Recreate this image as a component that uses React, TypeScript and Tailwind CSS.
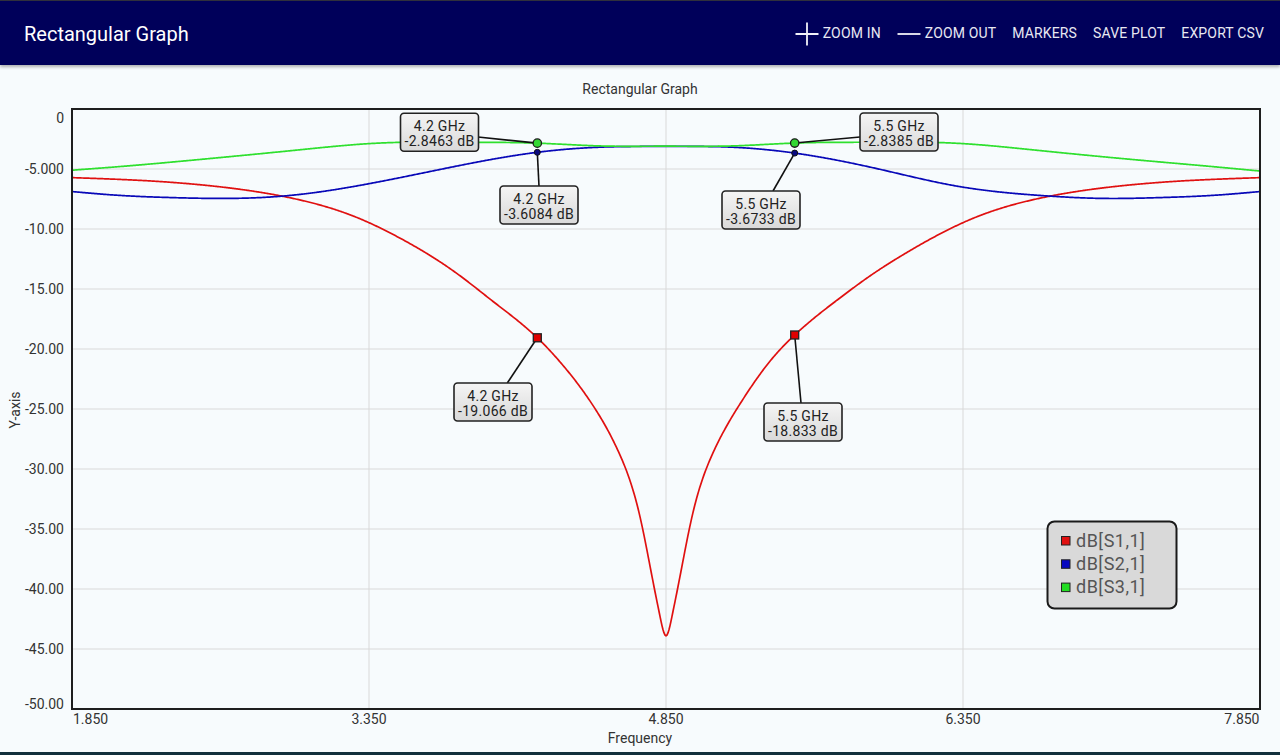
import React from "react";

type P = [number, number];

// plot area: 1.85..7.85 GHz -> x 72..1260, 0..-50 dB -> y 109..709
const X = (f: number) => 72 + (f - 1.85) * 198;
const Y = (db: number) => 109 - db * 12;
const F0 = 4.85;

// natural cubic spline through the sampled points
function spline(pts: P[]) {
  const n = pts.length;
  const xs = pts.map((p) => p[0]);
  const ys = pts.map((p) => p[1]);
  const h: number[] = [];
  for (let i = 0; i < n - 1; i++) h.push(xs[i + 1] - xs[i]);
  const a: number[] = new Array(n).fill(0);
  const b: number[] = new Array(n).fill(1);
  const c: number[] = new Array(n).fill(0);
  const r: number[] = new Array(n).fill(0);
  for (let i = 1; i < n - 1; i++) {
    a[i] = h[i - 1];
    b[i] = 2 * (h[i - 1] + h[i]);
    c[i] = h[i];
    r[i] = 6 * ((ys[i + 1] - ys[i]) / h[i] - (ys[i] - ys[i - 1]) / h[i - 1]);
  }
  for (let i = 1; i < n; i++) {
    const w = a[i] / b[i - 1];
    b[i] -= w * c[i - 1];
    r[i] -= w * r[i - 1];
  }
  const M: number[] = new Array(n).fill(0);
  M[n - 1] = r[n - 1] / b[n - 1];
  for (let i = n - 2; i >= 0; i--) M[i] = (r[i] - c[i] * M[i + 1]) / b[i];
  return (x: number) => {
    let i = 0;
    while (i < n - 2 && x > xs[i + 1]) i++;
    const hi = h[i];
    const A = xs[i + 1] - x;
    const B = x - xs[i];
    return (
      (M[i] * A * A * A) / (6 * hi) +
      (M[i + 1] * B * B * B) / (6 * hi) +
      (ys[i] / hi - (M[i] * hi) / 6) * A +
      (ys[i + 1] / hi - (M[i + 1] * hi) / 6) * B
    );
  };
}

function sym(c: number, side: P[], over: Record<string, number> = {}): P[] {
  const left = side
    .slice()
    .reverse()
    .map(([x, y]) => [-x, y] as P);
  const all: P[] = [...left, [0, c], ...side];
  return all.map(([x, y]) => [x, over[x.toFixed(3)] ?? y] as P);
}

const red = spline(
  sym(
    -43.9,
    [
      [0.03, -42.3],
      [0.066, -39.35],
      [0.131, -34.0],
      [0.232, -28.85],
      [0.369, -24.7],
      [0.535, -21.0],
      [0.65, -19.0],
      [0.874, -15.95],
      [1.04, -13.9],
      [1.207, -12.05],
      [1.379, -10.45],
      [1.545, -9.15],
      [1.934, -7.28],
      [2.3, -6.4],
      [2.6, -6.0],
      [3.0, -5.72],
    ],
    {
      "-0.650": -19.066,
      "-0.535": -21.08,
      "-0.874": -16.03,
      "0.535": -20.82,
      "0.650": -18.833,
      "0.874": -15.8,
      "1.040": -13.8,
    }
  )
);

const blue = spline(
  sym(
    -3.12,
    [
      [0.33, -3.18],
      [0.65, -3.64],
      [1.1, -4.9],
      [1.46, -6.1],
      [1.93, -7.25],
      [2.2, -7.45],
      [2.5, -7.38],
      [2.76, -7.2],
      [3.0, -6.88],
    ],
    { "-0.650": -3.6084, "0.650": -3.6733, "1.100": -5.1, "1.460": -6.4 }
  )
);

const green = spline(
  sym(
    -3.1,
    [
      [0.33, -3.08],
      [0.65, -2.85],
      [1.0, -2.77],
      [1.45, -2.84],
      [1.85, -3.4],
      [2.35, -4.2],
      [2.76, -4.8],
      [3.0, -5.1],
    ],
    { "-0.650": -2.8463, "0.650": -2.8385, "3.000": -5.17 }
  )
);

function trace(fn: (dx: number) => number) {
  let s = "";
  for (let i = 0; i <= 1200; i++) {
    const f = 1.85 + i * 0.005;
    s += (i ? "L" : "M") + X(f).toFixed(2) + " " + Y(fn(f - F0)).toFixed(2);
  }
  return s;
}

const yTicks: [string, number, number][] = [
  ["0", 0, 122.7],
  ["-5.000", -5, 174],
  ["-10.00", -10, 234],
  ["-15.00", -15, 294],
  ["-20.00", -20, 354],
  ["-25.00", -25, 414],
  ["-30.00", -30, 474],
  ["-35.00", -35, 534],
  ["-40.00", -40, 594],
  ["-45.00", -45, 654],
  ["-50.00", -50, 709],
];

type Marker = {
  f: number;
  db: number;
  box: [number, number];
  end: [number, number];
  kind: "r" | "g" | "b";
};

const markers: Marker[] = [
  { f: 4.2, db: -2.8463, box: [400.5, 113.3], end: [478, 137], kind: "g" },
  { f: 4.2, db: -3.6084, box: [500, 186], end: [539, 186], kind: "b" },
  { f: 5.5, db: -2.8385, box: [860, 113], end: [860, 137], kind: "g" },
  { f: 5.5, db: -3.6733, box: [722, 191], end: [773, 191], kind: "b" },
  { f: 4.2, db: -19.066, box: [454, 383], end: [507.3, 383], kind: "r" },
  { f: 5.5, db: -18.833, box: [764, 403], end: [801, 403], kind: "r" },
];

function PlusIcon() {
  return (
    <svg width="24" height="24" viewBox="0 0 24 24" className="shrink-0">
      <path d="M12 0.5V23.5M0.5 12H23.5" stroke="#f0f0f8" strokeWidth="1.8" />
    </svg>
  );
}

function MinusIcon() {
  return (
    <svg width="24" height="24" viewBox="0 0 24 24" className="shrink-0">
      <path d="M0.5 12H23.5" stroke="#f0f0f8" strokeWidth="1.8" />
    </svg>
  );
}

function Chart() {
  const legend: [string, string][] = [
    ["#e01010", "dB[S1,1]"],
    ["#0808c0", "dB[S2,1]"],
    ["#22dd22", "dB[S3,1]"],
  ];
  return (
    <svg width="1280" height="687" viewBox="0 65 1280 687" className="block shrink-0">
      <defs>
        <linearGradient id="boxfill" x1="0" y1="0" x2="0" y2="1">
          <stop offset="0" stopColor="#f5f5f5" />
          <stop offset="1" stopColor="#d9d9d9" />
        </linearGradient>
      </defs>

      <text x="640" y="94" textAnchor="middle" fontSize="14" fill="#333">
        Rectangular Graph
      </text>

      {/* grid */}
      {yTicks.slice(1, -1).map(([, v]) => (
        <line key={v} x1="72" x2="1260" y1={Y(v)} y2={Y(v)} stroke="#d9d9d9" strokeWidth="1" />
      ))}
      {[3.35, 4.85, 6.35].map((f) => (
        <line key={f} x1={X(f)} x2={X(f)} y1="109" y2="709" stroke="#d9d9d9" strokeWidth="1" />
      ))}

      {/* y labels */}
      {yTicks.map(([t, , by]) => (
        <text key={t} x="64" y={by} textAnchor="end" fontSize="14" fill="#333">
          {t}
        </text>
      ))}
      <text
        x="0"
        y="0"
        transform="translate(20 410) rotate(-90)"
        textAnchor="middle"
        fontSize="14"
        fill="#333"
      >
        Y-axis
      </text>

      {/* x labels */}
      <text x="73" y="724" fontSize="14" fill="#333">1.850</text>
      <text x={X(3.35)} y="724" textAnchor="middle" fontSize="14" fill="#333">3.350</text>
      <text x={X(4.85)} y="724" textAnchor="middle" fontSize="14" fill="#333">4.850</text>
      <text x={X(6.35)} y="724" textAnchor="middle" fontSize="14" fill="#333">6.350</text>
      <text x="1259.5" y="724" textAnchor="end" fontSize="14" fill="#333">7.850</text>
      <text x="640" y="743" textAnchor="middle" fontSize="14" fill="#333">Frequency</text>

      {/* traces */}
      <g fill="none" strokeWidth="1.7" strokeLinejoin="round">
        <path d={trace(red)} stroke="#e01010" />
        <path d={trace(blue)} stroke="#0808b8" />
        <path d={trace(green)} stroke="#2ee02e" />
      </g>

      {/* frame */}
      <rect x="72" y="109" width="1188" height="600" fill="none" stroke="#1e1e1e" strokeWidth="2" />

      {/* markers */}
      {markers.map((m, i) => {
        const mx = X(m.f);
        const my = Y(m.db);
        const [bx, by] = m.box;
        return (
          <g key={i}>
            <line x1={mx} y1={my} x2={m.end[0]} y2={m.end[1]} stroke="#111" strokeWidth="1.6" />
            {m.kind === "r" && (
              <rect x={mx - 4} y={my - 4} width="8" height="8" fill="#e00000" stroke="#222" strokeWidth="1.3" />
            )}
            {m.kind === "g" && <circle cx={mx} cy={my} r="4.2" fill="#33d833" stroke="#1a1a1a" strokeWidth="1.3" />}
            {m.kind === "b" && <circle cx={mx} cy={my} r="3" fill="#0a0a80" stroke="#111" strokeWidth="1" />}
            <rect
              x={bx}
              y={by}
              width="78"
              height="38"
              rx="3.5"
              fill="url(#boxfill)"
              stroke="#222"
              strokeWidth="1.6"
            />
            <text x={bx + 39} y={by + 17.5} textAnchor="middle" fontSize="14" letterSpacing="0.3" fill="#222">
              {m.f.toFixed(1)} GHz
            </text>
            <text x={bx + 39} y={by + 33} textAnchor="middle" fontSize="14" letterSpacing="0.3" fill="#222">
              {m.db.toString()} dB
            </text>
          </g>
        );
      })}

      {/* legend */}
      <rect x="1047.5" y="521.5" width="129" height="87" rx="7" fill="#d9d9d9" stroke="#1a1a1a" strokeWidth="2" />
      {legend.map(([c, t], i) => (
        <g key={t}>
          <rect x="1061.5" y={536.5 + i * 23.3} width="8.5" height="8.5" fill={c} stroke="#222" strokeWidth="1" />
          <text x="1076" y={546.5 + i * 23.3} fontSize="18" letterSpacing="0.5" fill="#555">
            {t}
          </text>
        </g>
      ))}
    </svg>
  );
}

export default function App() {
  return (
    <div className="flex h-[755px] w-[1280px] flex-col overflow-hidden bg-[#f7fbfd] font-['Roboto',sans-serif]">
      <header className="relative z-10 flex h-[65px] shrink-0 items-center border-t border-[#30303c] bg-[#00005a] pl-6 pr-2 shadow-[0_2px_3px_rgba(0,0,0,0.3)]">
        <h1 className="pt-[2px] text-[20px] font-normal text-white">Rectangular Graph</h1>
        <nav className="ml-auto flex items-center pt-[1px] text-[14px] tracking-[0.15px] text-[#e8e8f2]">
          <button className="flex items-center gap-1 px-2">
            <PlusIcon />
            ZOOM IN
          </button>
          <button className="flex items-center gap-1 px-2">
            <MinusIcon />
            ZOOM OUT
          </button>
          <button className="px-2">MARKERS</button>
          <button className="px-2">SAVE PLOT</button>
          <button className="px-2">EXPORT CSV</button>
        </nav>
      </header>
      <Chart />
      <div className="h-[3px] shrink-0 bg-[#12303c]" />
    </div>
  );
}
